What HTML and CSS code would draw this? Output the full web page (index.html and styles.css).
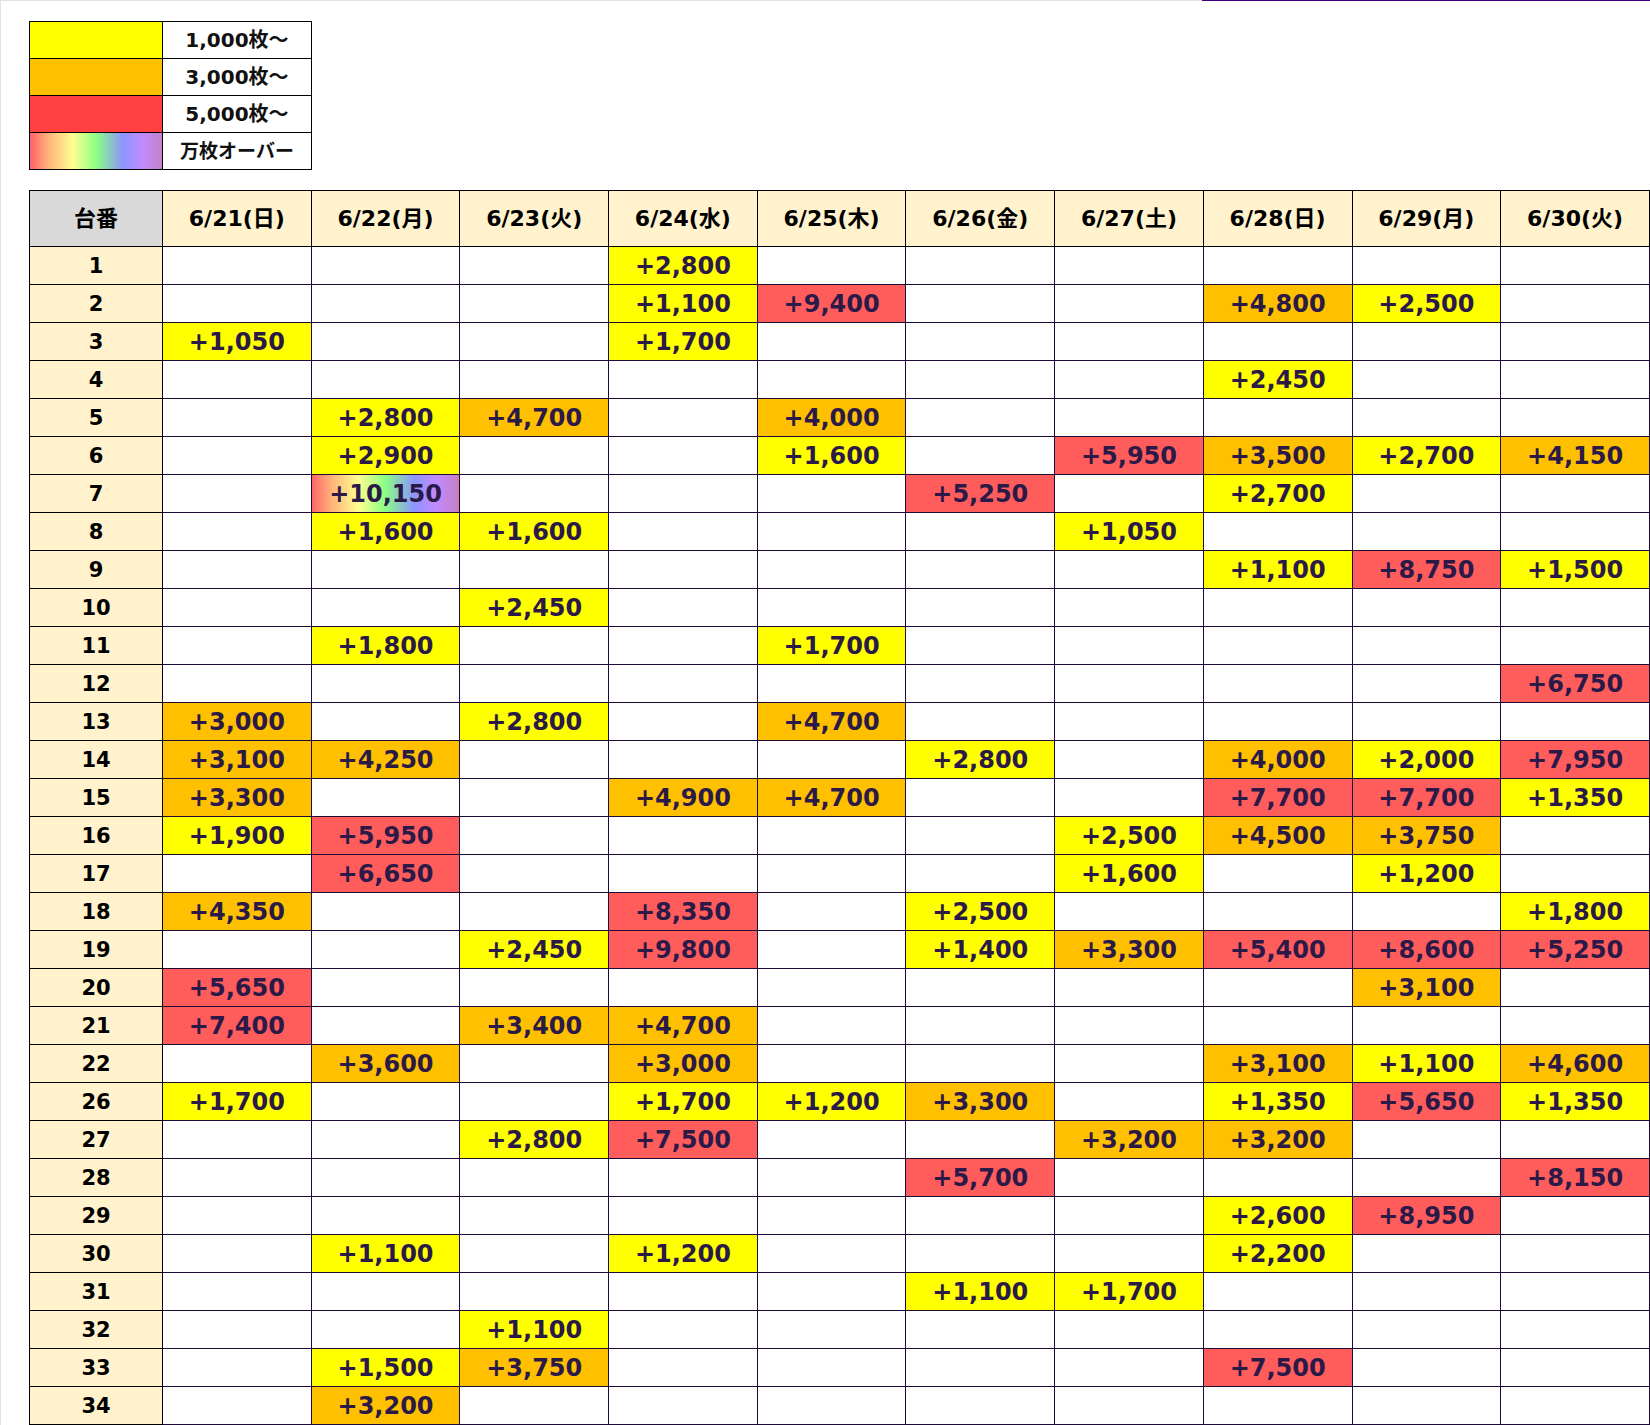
FILE: index.html
```html
<!DOCTYPE html>
<html lang="ja">
<head>
<meta charset="utf-8">
<title>差枚表</title>
<link rel="stylesheet" href="styles.css">
</head>
<body>
<div class="topline"><div class="tl-gray"></div><div class="tl-purple"></div></div>
<div class="page">
<table class="legend">
<tr><td class="sw y"></td><td class="lbl">1,000枚～</td></tr>
<tr><td class="sw o"></td><td class="lbl">3,000枚～</td></tr>
<tr><td class="sw lr"></td><td class="lbl">5,000枚～</td></tr>
<tr><td class="sw rb"></td><td class="lbl">万枚オーバー</td></tr>
</table>

<table class="grid">
<thead>
<tr><th class="corner">台番</th><th>6/21(日)</th><th>6/22(月)</th><th>6/23(火)</th><th>6/24(水)</th><th>6/25(木)</th><th>6/26(金)</th><th>6/27(土)</th><th>6/28(日)</th><th>6/29(月)</th><th>6/30(火)</th></tr>
</thead>
<tbody>
<tr><th>1</th><td></td><td></td><td></td><td class="y">+2,800</td><td></td><td></td><td></td><td></td><td></td><td></td></tr>
<tr><th>2</th><td></td><td></td><td></td><td class="y">+1,100</td><td class="r">+9,400</td><td></td><td></td><td class="o">+4,800</td><td class="y">+2,500</td><td></td></tr>
<tr><th>3</th><td class="y">+1,050</td><td></td><td></td><td class="y">+1,700</td><td></td><td></td><td></td><td></td><td></td><td></td></tr>
<tr><th>4</th><td></td><td></td><td></td><td></td><td></td><td></td><td></td><td class="y">+2,450</td><td></td><td></td></tr>
<tr><th>5</th><td></td><td class="y">+2,800</td><td class="o">+4,700</td><td></td><td class="o">+4,000</td><td></td><td></td><td></td><td></td><td></td></tr>
<tr><th>6</th><td></td><td class="y">+2,900</td><td></td><td></td><td class="y">+1,600</td><td></td><td class="r">+5,950</td><td class="o">+3,500</td><td class="y">+2,700</td><td class="o">+4,150</td></tr>
<tr><th>7</th><td></td><td class="rb">+10,150</td><td></td><td></td><td></td><td class="r">+5,250</td><td></td><td class="y">+2,700</td><td></td><td></td></tr>
<tr><th>8</th><td></td><td class="y">+1,600</td><td class="y">+1,600</td><td></td><td></td><td></td><td class="y">+1,050</td><td></td><td></td><td></td></tr>
<tr><th>9</th><td></td><td></td><td></td><td></td><td></td><td></td><td></td><td class="y">+1,100</td><td class="r">+8,750</td><td class="y">+1,500</td></tr>
<tr><th>10</th><td></td><td></td><td class="y">+2,450</td><td></td><td></td><td></td><td></td><td></td><td></td><td></td></tr>
<tr><th>11</th><td></td><td class="y">+1,800</td><td></td><td></td><td class="y">+1,700</td><td></td><td></td><td></td><td></td><td></td></tr>
<tr><th>12</th><td></td><td></td><td></td><td></td><td></td><td></td><td></td><td></td><td></td><td class="r">+6,750</td></tr>
<tr><th>13</th><td class="o">+3,000</td><td></td><td class="y">+2,800</td><td></td><td class="o">+4,700</td><td></td><td></td><td></td><td></td><td></td></tr>
<tr><th>14</th><td class="o">+3,100</td><td class="o">+4,250</td><td></td><td></td><td></td><td class="y">+2,800</td><td></td><td class="o">+4,000</td><td class="y">+2,000</td><td class="r">+7,950</td></tr>
<tr><th>15</th><td class="o">+3,300</td><td></td><td></td><td class="o">+4,900</td><td class="o">+4,700</td><td></td><td></td><td class="r">+7,700</td><td class="r">+7,700</td><td class="y">+1,350</td></tr>
<tr><th>16</th><td class="y">+1,900</td><td class="r">+5,950</td><td></td><td></td><td></td><td></td><td class="y">+2,500</td><td class="o">+4,500</td><td class="o">+3,750</td><td></td></tr>
<tr><th>17</th><td></td><td class="r">+6,650</td><td></td><td></td><td></td><td></td><td class="y">+1,600</td><td></td><td class="y">+1,200</td><td></td></tr>
<tr><th>18</th><td class="o">+4,350</td><td></td><td></td><td class="r">+8,350</td><td></td><td class="y">+2,500</td><td></td><td></td><td></td><td class="y">+1,800</td></tr>
<tr><th>19</th><td></td><td></td><td class="y">+2,450</td><td class="r">+9,800</td><td></td><td class="y">+1,400</td><td class="o">+3,300</td><td class="r">+5,400</td><td class="r">+8,600</td><td class="r">+5,250</td></tr>
<tr><th>20</th><td class="r">+5,650</td><td></td><td></td><td></td><td></td><td></td><td></td><td></td><td class="o">+3,100</td><td></td></tr>
<tr><th>21</th><td class="r">+7,400</td><td></td><td class="o">+3,400</td><td class="o">+4,700</td><td></td><td></td><td></td><td></td><td></td><td></td></tr>
<tr><th>22</th><td></td><td class="o">+3,600</td><td></td><td class="o">+3,000</td><td></td><td></td><td></td><td class="o">+3,100</td><td class="y">+1,100</td><td class="o">+4,600</td></tr>
<tr><th>26</th><td class="y">+1,700</td><td></td><td></td><td class="y">+1,700</td><td class="y">+1,200</td><td class="o">+3,300</td><td></td><td class="y">+1,350</td><td class="r">+5,650</td><td class="y">+1,350</td></tr>
<tr><th>27</th><td></td><td></td><td class="y">+2,800</td><td class="r">+7,500</td><td></td><td></td><td class="o">+3,200</td><td class="o">+3,200</td><td></td><td></td></tr>
<tr><th>28</th><td></td><td></td><td></td><td></td><td></td><td class="r">+5,700</td><td></td><td></td><td></td><td class="r">+8,150</td></tr>
<tr><th>29</th><td></td><td></td><td></td><td></td><td></td><td></td><td></td><td class="y">+2,600</td><td class="r">+8,950</td><td></td></tr>
<tr><th>30</th><td></td><td class="y">+1,100</td><td></td><td class="y">+1,200</td><td></td><td></td><td></td><td class="y">+2,200</td><td></td><td></td></tr>
<tr><th>31</th><td></td><td></td><td></td><td></td><td></td><td class="y">+1,100</td><td class="y">+1,700</td><td></td><td></td><td></td></tr>
<tr><th>32</th><td></td><td></td><td class="y">+1,100</td><td></td><td></td><td></td><td></td><td></td><td></td><td></td></tr>
<tr><th>33</th><td></td><td class="y">+1,500</td><td class="o">+3,750</td><td></td><td></td><td></td><td></td><td class="r">+7,500</td><td></td><td></td></tr>
<tr><th>34</th><td></td><td class="o">+3,200</td><td></td><td></td><td></td><td></td><td></td><td></td><td></td><td></td></tr>
</tbody>
</table>
</div>
</body>
</html>
```
FILE: styles.css
```css
html, body {
  margin: 0;
  padding: 0;
  overflow: hidden;
  background: #ffffff;
}
body {
  width: 1650px;
  height: 1425px;
  font-family: "DejaVu Sans", "Noto Sans CJK JP", sans-serif;
  font-weight: bold;
  color: #000;
}
.topline {
  display: flex;
  height: 1px;
}
.tl-gray {
  width: 1202px;
  background: #e2e2e2;
}
.tl-purple {
  flex: 1;
  background: #3d007a;
}
.page {
  border-left: 1px solid #e2e2e2;
  padding: 20px 0 0 28px;
  height: 1404px;
}
.legend {
  border-collapse: collapse;
  table-layout: fixed;
  width: 282px;
}
.legend td {
  border: 1px solid #000;
  height: 36px;
  padding: 0;
  text-align: center;
  vertical-align: middle;
}
.legend .sw { width: 132px; }
.legend .lbl {
  width: 148px;
  font-size: 20px;
  color: #111;
  padding-bottom: 3px;
  height: 33px;
}
.legend tr:last-child .lbl { font-size: 19px; }
.y { background: #ffff00; }
.o { background: #ffc000; }
.r { background: #ff5c5c; }
.lr { background: #ff4040; }
.rb {
  background: linear-gradient(to right, #ff6464 0%, #ffb47c 14%, #ffff90 32%, #8cff84 50%, #8c94ff 70%, #c08cff 84%, #c480c8 100%);
}
.grid {
  margin-top: 20px;
  border-collapse: collapse;
  table-layout: fixed;
  width: 1621px;
  border: 1px solid #000;
}
.grid th, .grid td {
  padding: 0;
  text-align: center;
  vertical-align: middle;
  white-space: nowrap;
  overflow: hidden;
}
.grid thead th {
  height: 50px;
  padding-bottom: 5px;
  background: #fff2cc;
  border: 1px solid #000;
  font-size: 22px;
  color: #000;
}
.grid thead th.corner {
  width: 132px;
  background: #d9d9d9;
}
.grid tbody th {
  background: #fff2cc;
  border: 1px solid #000;
  font-size: 21px;
  color: #000;
  height: 37px;
}
.grid tbody td {
  border: 1px solid #1e0a36;
  font-size: 24px;
  color: #2b1a48;
  height: 37px;
}
```
